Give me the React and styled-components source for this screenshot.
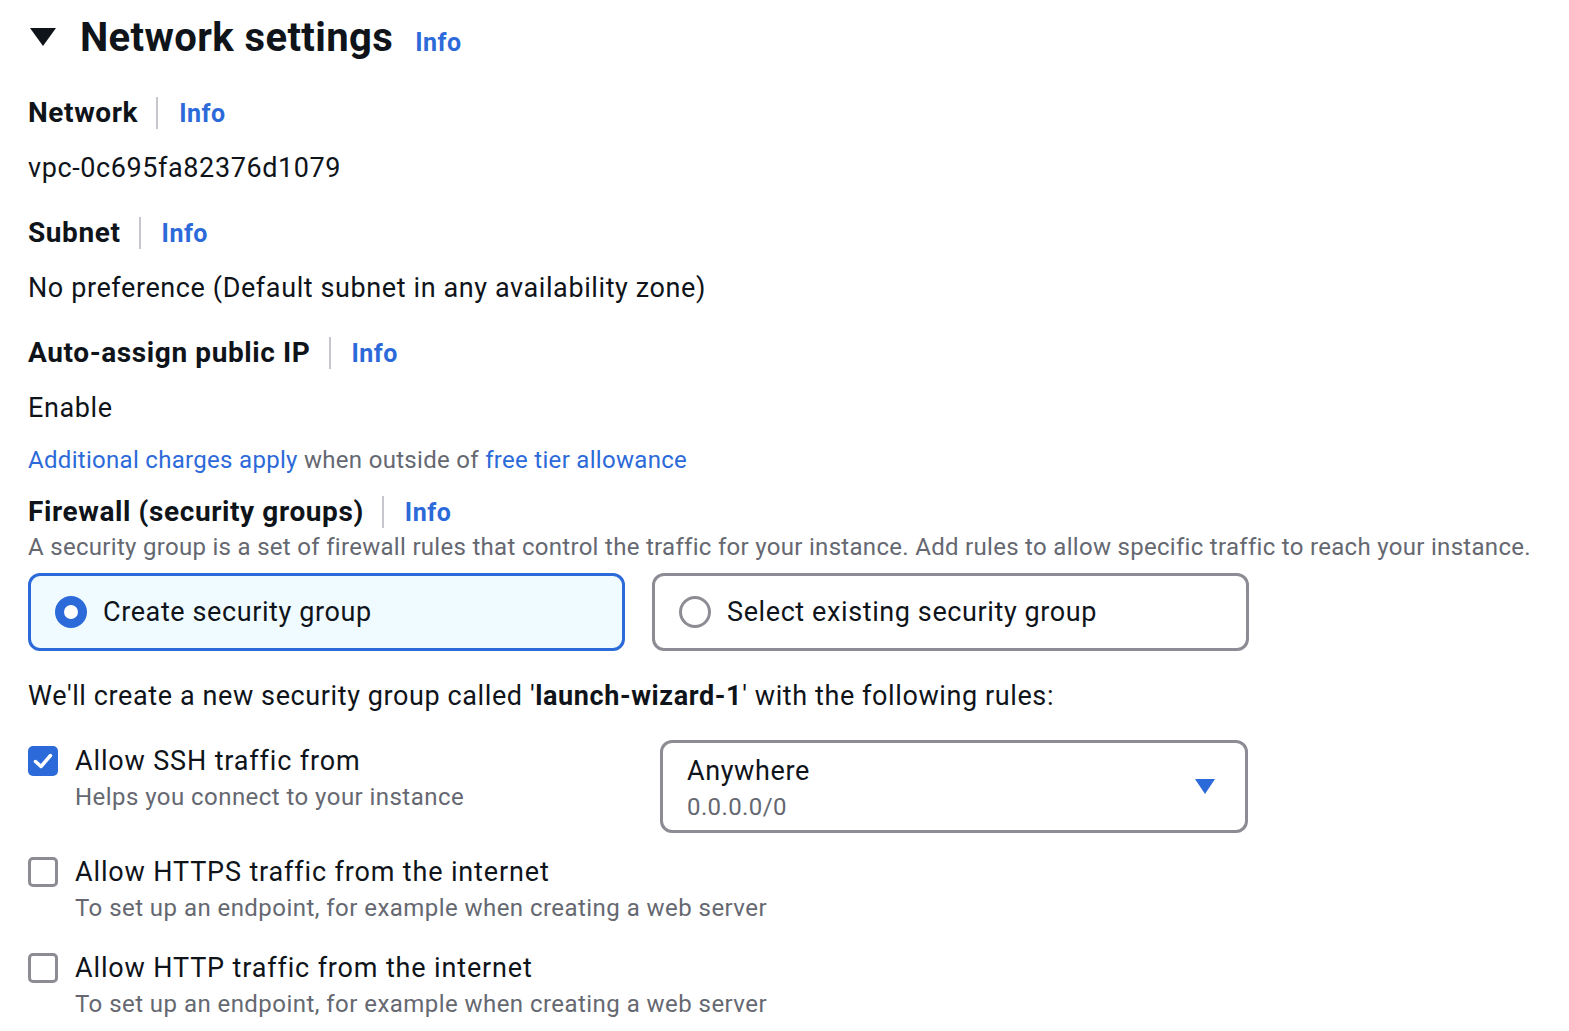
import React from 'react';
import styled, { createGlobalStyle } from 'styled-components';

const GlobalStyle = createGlobalStyle`
  body {
    margin: 0;
    background: #ffffff;
    font-family: Roboto, 'Noto Sans', sans-serif;
    color: #0f141a;
  }
`;

const Page = styled.div`
  padding: 13px 28px 0 28px;
  width: 1560px;
  box-sizing: border-box;
`;

const HeaderRow = styled.div`
  display: flex;
  align-items: center;
  height: 50px;
`;

const Caret = styled.svg`
  width: 26px;
  height: 20px;
  margin-left: 2px;
  margin-right: 24px;
  margin-top: -2px;
`;

const Heading = styled.h2`
  margin: 0;
  font-size: 40px;
  font-weight: 700;
  line-height: 50px;
  letter-spacing: 0.4px;
`;

const InfoLink = styled.a`
  color: #2c6ad9;
  font-weight: 700;
  font-size: 25px;
  letter-spacing: 0.5px;
  text-decoration: none;
  margin-left: ${p => p.$gap || 0}px;
  ${p => p.$drop && `padding-top: ${p.$drop}px;`}
`;

const Field = styled.div`
  margin-top: ${p => p.$top}px;
`;

const LabelRow = styled.div`
  display: flex;
  align-items: center;
  height: 36px;
`;

const Label = styled.span`
  font-size: 28px;
  font-weight: 700;
  line-height: 36px;
  letter-spacing: 0.6px;
`;

const Divider = styled.span`
  width: 2px;
  height: 32px;
  background: #c6c6cd;
  margin: 0 21px 0 18px;
`;

const Value = styled.div`
  font-size: 27px;
  line-height: 36px;
  letter-spacing: 0.6px;
  margin-top: 19px;
`;

const Note = styled.div`
  font-size: 24px;
  line-height: 32px;
  letter-spacing: 0.3px;
  color: #656871;
  margin-top: ${p => p.$top || 0}px;
  white-space: nowrap;
`;

const Link = styled.a`
  color: #2c6ad9;
  text-decoration: none;
`;

const Tiles = styled.div`
  display: grid;
  grid-template-columns: 597px 597px;
  gap: 27px;
  margin-top: 10px;
`;

const Tile = styled.div`
  height: 78px;
  box-sizing: border-box;
  border: 3px solid ${p => (p.$active ? '#2c6ad9' : '#8c8c94')};
  background: ${p => (p.$active ? '#f0fbff' : '#ffffff')};
  border-radius: 12px;
  display: flex;
  align-items: center;
  padding-left: 24px;
  gap: 16px;
  font-size: 27px;
  letter-spacing: 0.6px;
`;

const Radio = styled.span`
  width: 32px;
  height: 32px;
  box-sizing: border-box;
  border-radius: 50%;
  border: ${p => (p.$checked ? '9px solid #2c6ad9' : '3px solid #8c8c94')};
  background: #ffffff;
  flex-shrink: 0;
`;

const Sentence = styled.div`
  font-size: 27px;
  line-height: 36px;
  letter-spacing: 0.6px;
  margin-top: 27px;
`;

const RuleRow = styled.div`
  display: grid;
  grid-template-columns: ${p => (p.$split ? '632px 588px' : '1fr')};
  margin-top: ${p => p.$top}px;
`;

const CheckLine = styled.div`
  display: flex;
  gap: 17px;
  white-space: nowrap;
`;

const Box = styled.span`
  width: 30px;
  height: 30px;
  box-sizing: border-box;
  border-radius: 5px;
  border: ${p => (p.$checked ? 'none' : '3px solid #8c8c94')};
  background: ${p => (p.$checked ? '#2c6ad9' : '#ffffff')};
  display: flex;
  align-items: center;
  justify-content: center;
  margin-top: 3px;
  flex-shrink: 0;
`;

const CheckText = styled.div`
  display: flex;
  flex-direction: column;
`;

const CheckLabel = styled.span`
  font-size: 27px;
  line-height: 36px;
  letter-spacing: 0.85px;
`;

const CheckDesc = styled.span`
  font-size: 24px;
  line-height: 30px;
  letter-spacing: 0.45px;
  color: #656871;
  margin-top: 3px;
`;

const Select = styled.div`
  height: 93px;
  box-sizing: border-box;
  border: 3px solid #8c8c94;
  border-radius: 12px;
  display: flex;
  align-items: center;
  justify-content: space-between;
  padding: 0 30px 0 24px;
  margin-top: -3px;
`;

const SelectText = styled.div`
  display: flex;
  flex-direction: column;
  padding-top: 4px;
`;

const SelectMain = styled.span`
  font-size: 27px;
  line-height: 36px;
  letter-spacing: 0.6px;
`;

const SelectSub = styled.span`
  font-size: 24px;
  line-height: 36px;
  letter-spacing: 0.4px;
  color: #656871;
`;

const rules = [
  { label: 'Allow SSH traffic from', desc: 'Helps you connect to your instance', checked: true, select: true, top: 29 },
  { label: 'Allow HTTPS traffic from the internet', desc: 'To set up an endpoint, for example when creating a web server', top: 21 },
  { label: 'Allow HTTP traffic from the internet', desc: 'To set up an endpoint, for example when creating a web server', top: 27 },
];

const fields = [
  { label: 'Network', value: 'vpc-0c695fa82376d1079', top: 32 },
  { label: 'Subnet', value: 'No preference (Default subnet in any availability zone)', top: 29 },
  { label: 'Auto-assign public IP', value: 'Enable', top: 29 },
];

const LabelWithInfo = ({ children }) => (
  <LabelRow>
    <Label>{children}</Label>
    <Divider />
    <InfoLink href="#">Info</InfoLink>
  </LabelRow>
);

const App = () => (
  <>
    <GlobalStyle />
    <Page>
      <HeaderRow>
        <Caret viewBox="0 0 26 20">
          <path d="M0 1 H26 L13 19 Z" fill="#0f141a" />
        </Caret>
        <Heading>Network settings</Heading>
        <InfoLink href="#" $gap={22} $drop={8}>Info</InfoLink>
      </HeaderRow>

      {fields.map((f, i) => (
        <Field key={i} $top={f.top}>
          <LabelWithInfo>{f.label}</LabelWithInfo>
          <Value>{f.value}</Value>
        </Field>
      ))}

      <Note $top={18}>
        <Link href="#">Additional charges apply</Link> when outside of <Link href="#">free tier allowance</Link>
      </Note>

      <Field $top={18}>
        <LabelWithInfo>Firewall (security groups)</LabelWithInfo>
        <Note $top={1}>
          A security group is a set of firewall rules that control the traffic for your instance. Add rules to allow specific traffic to reach your instance.
        </Note>
      </Field>

      <Tiles>
        <Tile $active>
          <Radio $checked />
          Create security group
        </Tile>
        <Tile>
          <Radio />
          Select existing security group
        </Tile>
      </Tiles>

      <Sentence>
        We'll create a new security group called '<b>launch-wizard-1</b>' with the following rules:
      </Sentence>

      {rules.map((r, i) => (
        <RuleRow key={i} $top={r.top} $split={r.select}>
          <CheckLine>
            <Box $checked={r.checked}>
              {r.checked && (
                <svg width="20" height="16" viewBox="0 0 20 16">
                  <path d="M2.5 8.5 L8 13.5 L17.5 2.5" fill="none" stroke="#ffffff" strokeWidth="3.5" strokeLinecap="round" strokeLinejoin="round" />
                </svg>
              )}
            </Box>
            <CheckText>
              <CheckLabel>{r.label}</CheckLabel>
              <CheckDesc>{r.desc}</CheckDesc>
            </CheckText>
          </CheckLine>
          {r.select && (
            <Select>
              <SelectText>
                <SelectMain>Anywhere</SelectMain>
                <SelectSub>0.0.0.0/0</SelectSub>
              </SelectText>
              <svg width="20" height="16" viewBox="0 0 20 16">
                <path d="M0 0 H20 L10 15 Z" fill="#2c6ad9" />
              </svg>
            </Select>
          )}
        </RuleRow>
      ))}
    </Page>
  </>
);

export default App;
